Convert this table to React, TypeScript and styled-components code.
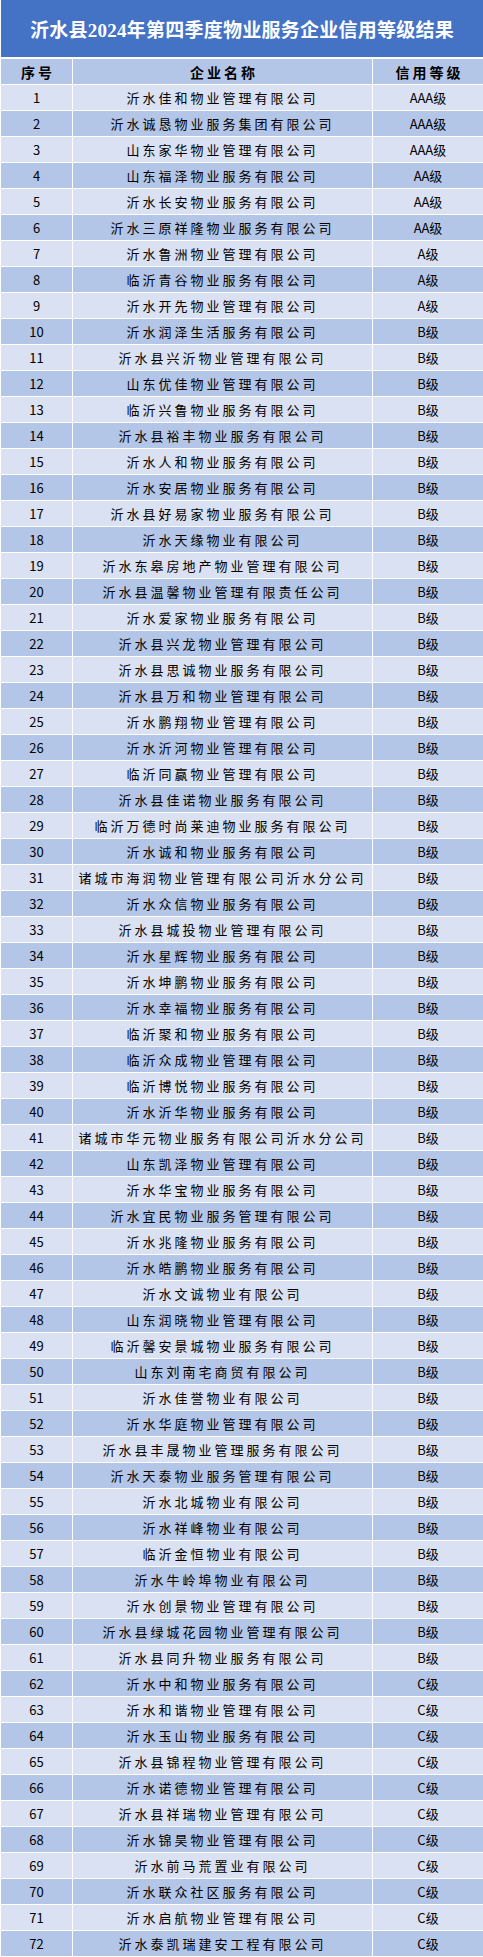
import React from 'react';
import styled, { createGlobalStyle } from 'styled-components';

const GlobalStyle = createGlobalStyle`
  html, body {
    margin: 0;
    padding: 0;
    background-color: #ffffff;
  }
`;

const Sheet = styled.div`
  width: 483px;
  height: 1957px;
  box-sizing: border-box;
  padding-left: 1px;
  display: grid;
  grid-template-columns: 71px 299px 110px;
  grid-template-rows: 57px 26px;
  grid-auto-rows: 25px;
  column-gap: 1px;
  row-gap: 1px;
  align-content: start;
  background-color: #ffffff;
  font-family: 'Noto Sans CJK SC', 'Liberation Sans', sans-serif;
  color: #000;
`;

const Title = styled.div`
  grid-column: 1 / -1;
  display: flex;
  align-items: center;
  justify-content: center;
  background-color: #4472c4;
  color: #ffffff;
  font-family: 'Liberation Serif', 'Noto Sans CJK SC', serif;
  font-weight: 700;
  font-size: 19px;
  letter-spacing: 0.25px;
  white-space: nowrap;
`;

const HeadCell = styled.div`
  display: flex;
  align-items: center;
  justify-content: center;
  margin-top: 1px;
  background-color: #b4c6e7;
  font-weight: 700;
  font-size: 14px;
  letter-spacing: 3px;
  padding-left: 3px;
`;

const Cell = styled.div<{ $shade: 'light' | 'dark'; $spaced?: boolean }>`
  display: flex;
  align-items: center;
  justify-content: center;
  background-color: ${(p) => (p.$shade === 'dark' ? '#b4c6e7' : '#d9e1f2')};
  font-size: 13px;
  letter-spacing: ${(p) => (p.$spaced ? '3px' : '0')};
  white-space: nowrap;
`;

const rows: [string, string][] = [
  ['沂水佳和物业管理有限公司', 'AAA级'],
  ['沂水诚恳物业服务集团有限公司', 'AAA级'],
  ['山东家华物业管理有限公司', 'AAA级'],
  ['山东福泽物业服务有限公司', 'AA级'],
  ['沂水长安物业服务有限公司', 'AA级'],
  ['沂水三原祥隆物业服务有限公司', 'AA级'],
  ['沂水鲁洲物业管理有限公司', 'A级'],
  ['临沂青谷物业服务有限公司', 'A级'],
  ['沂水开先物业管理有限公司', 'A级'],
  ['沂水润泽生活服务有限公司', 'B级'],
  ['沂水县兴沂物业管理有限公司', 'B级'],
  ['山东优佳物业管理有限公司', 'B级'],
  ['临沂兴鲁物业服务有限公司', 'B级'],
  ['沂水县裕丰物业服务有限公司', 'B级'],
  ['沂水人和物业服务有限公司', 'B级'],
  ['沂水安居物业服务有限公司', 'B级'],
  ['沂水县好易家物业服务有限公司', 'B级'],
  ['沂水天缘物业有限公司', 'B级'],
  ['沂水东皋房地产物业管理有限公司', 'B级'],
  ['沂水县温馨物业管理有限责任公司', 'B级'],
  ['沂水爱家物业服务有限公司', 'B级'],
  ['沂水县兴龙物业管理有限公司', 'B级'],
  ['沂水县思诚物业服务有限公司', 'B级'],
  ['沂水县万和物业管理有限公司', 'B级'],
  ['沂水鹏翔物业管理有限公司', 'B级'],
  ['沂水沂河物业管理有限公司', 'B级'],
  ['临沂同赢物业管理有限公司', 'B级'],
  ['沂水县佳诺物业服务有限公司', 'B级'],
  ['临沂万德时尚莱迪物业服务有限公司', 'B级'],
  ['沂水诚和物业服务有限公司', 'B级'],
  ['诸城市海润物业管理有限公司沂水分公司', 'B级'],
  ['沂水众信物业服务有限公司', 'B级'],
  ['沂水县城投物业管理有限公司', 'B级'],
  ['沂水星辉物业服务有限公司', 'B级'],
  ['沂水坤鹏物业服务有限公司', 'B级'],
  ['沂水幸福物业服务有限公司', 'B级'],
  ['临沂聚和物业服务有限公司', 'B级'],
  ['临沂众成物业管理有限公司', 'B级'],
  ['临沂博悦物业服务有限公司', 'B级'],
  ['沂水沂华物业服务有限公司', 'B级'],
  ['诸城市华元物业服务有限公司沂水分公司', 'B级'],
  ['山东凯泽物业管理有限公司', 'B级'],
  ['沂水华宝物业服务有限公司', 'B级'],
  ['沂水宜民物业服务管理有限公司', 'B级'],
  ['沂水兆隆物业服务有限公司', 'B级'],
  ['沂水皓鹏物业服务有限公司', 'B级'],
  ['沂水文诚物业有限公司', 'B级'],
  ['山东润晓物业管理有限公司', 'B级'],
  ['临沂馨安景城物业服务有限公司', 'B级'],
  ['山东刘南宅商贸有限公司', 'B级'],
  ['沂水佳誉物业有限公司', 'B级'],
  ['沂水华庭物业管理有限公司', 'B级'],
  ['沂水县丰晟物业管理服务有限公司', 'B级'],
  ['沂水天泰物业服务管理有限公司', 'B级'],
  ['沂水北城物业有限公司', 'B级'],
  ['沂水祥峰物业有限公司', 'B级'],
  ['临沂金恒物业有限公司', 'B级'],
  ['沂水牛岭埠物业有限公司', 'B级'],
  ['沂水创景物业管理有限公司', 'B级'],
  ['沂水县绿城花园物业管理有限公司', 'B级'],
  ['沂水县同升物业服务有限公司', 'B级'],
  ['沂水中和物业服务有限公司', 'C级'],
  ['沂水和谐物业管理有限公司', 'C级'],
  ['沂水玉山物业服务有限公司', 'C级'],
  ['沂水县锦程物业管理有限公司', 'C级'],
  ['沂水诺德物业管理有限公司', 'C级'],
  ['沂水县祥瑞物业管理有限公司', 'C级'],
  ['沂水锦昊物业管理有限公司', 'C级'],
  ['沂水前马荒置业有限公司', 'C级'],
  ['沂水联众社区服务有限公司', 'C级'],
  ['沂水启航物业管理有限公司', 'C级'],
  ['沂水泰凯瑞建安工程有限公司', 'C级'],
];

const App = () => (
  <>
    <GlobalStyle />
    <Sheet>
      <Title>沂水县2024年第四季度物业服务企业信用等级结果</Title>
      <HeadCell>序号</HeadCell>
      <HeadCell>企业名称</HeadCell>
      <HeadCell>信用等级</HeadCell>
      {rows.map(([name, grade], i) => {
        const shade = i % 2 === 0 ? 'light' : 'dark';
        return (
          <React.Fragment key={i}>
            <Cell $shade={shade}>{i + 1}</Cell>
            <Cell $shade={shade} $spaced>
              {name}
            </Cell>
            <Cell $shade={shade}>{grade}</Cell>
          </React.Fragment>
        );
      })}
    </Sheet>
  </>
);

export default App;
